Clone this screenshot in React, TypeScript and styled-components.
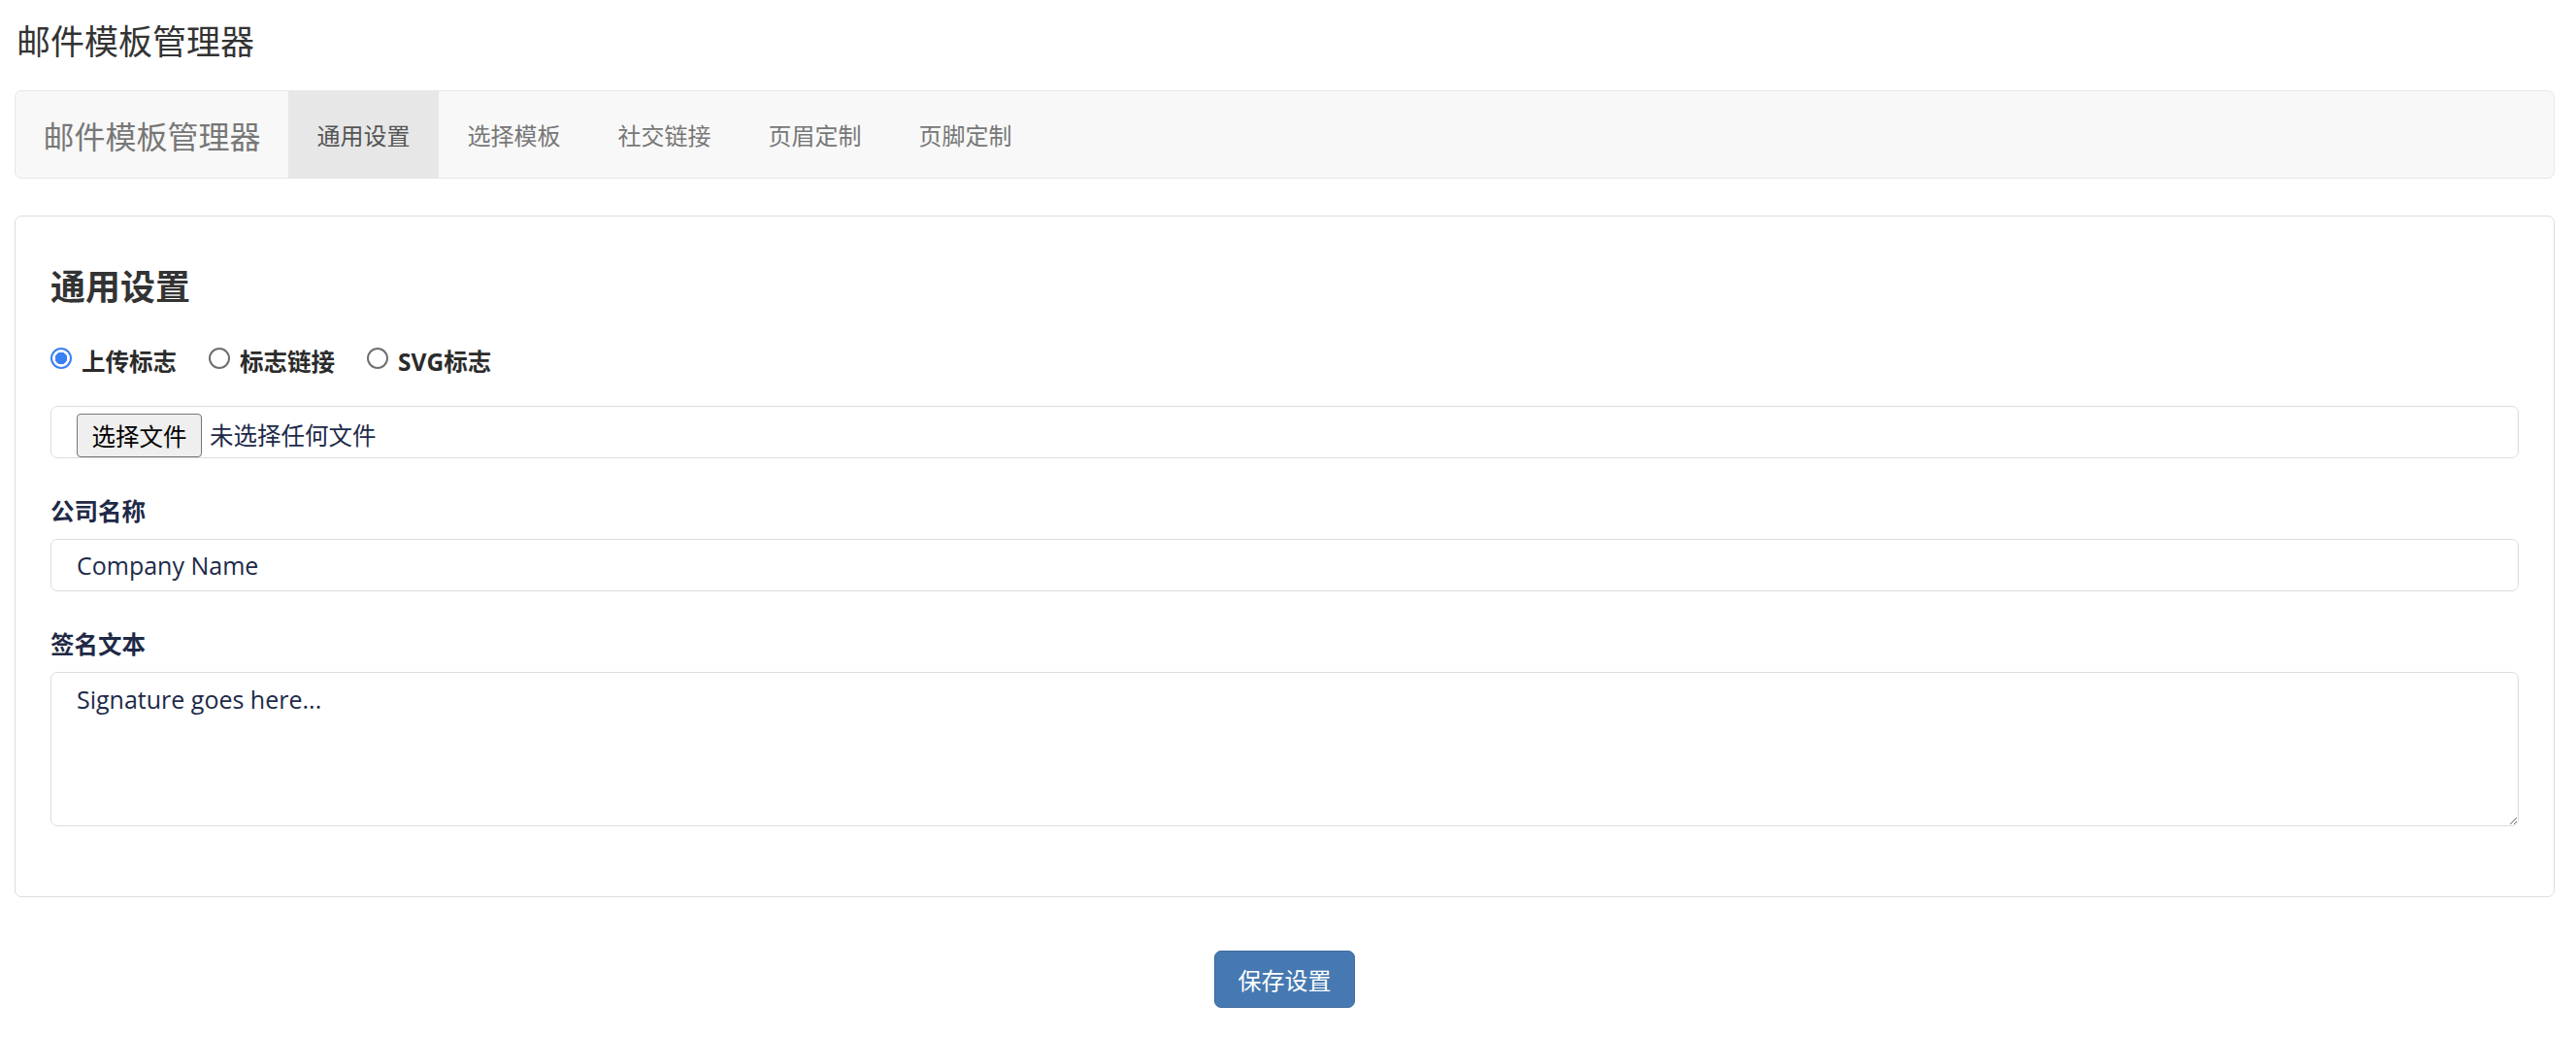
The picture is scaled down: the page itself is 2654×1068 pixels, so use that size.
import React, { useState } from "react"
import styled, { createGlobalStyle } from "styled-components"

const GlobalStyle = createGlobalStyle`
  html, body {
    margin: 0;
    padding: 0;
    background: #ffffff;
  }
  body {
    font-family: "Open Sans", "Noto Sans CJK SC", sans-serif;
    color: #333333;
  }
  * {
    box-sizing: border-box;
  }
`;

const Page = styled.div`
  padding: 22px 22px 40px 15px;
`;

const PageTitle = styled.h1`
  margin: 0 0 30px 2px;
  font-size: 35px;
  line-height: 41px;
  font-weight: 400;
  color: #333;
`;

const NavBar = styled.nav`
  display: flex;
  height: 91px;
  background: #f8f8f8;
  border: 1px solid #e7e7e7;
  border-radius: 7px;
  margin-bottom: 38px;
`;

const Brand = styled.a`
  display: flex;
  align-items: center;
  padding: 0 28.5px;
  font-size: 32px;
  color: #777;
  text-decoration: none;
`;

const Tab = styled.a<{ $active?: boolean }>`
  display: flex;
  align-items: center;
  padding: 0 29.5px;
  font-size: 24px;
  color: ${(p) => (p.$active ? "#555" : "#777")};
  background: ${(p) => (p.$active ? "#e7e7e7" : "transparent")};
  cursor: pointer;
`;

const Card = styled.section`
  border: 1px solid #dddddd;
  border-radius: 7px;
  padding: 36px 36px 37px;
`;

const SectionTitle = styled.h2`
  margin: 16px 0 38px;
  font-size: 36px;
  line-height: 41px;
  font-weight: 700;
  color: #333;
`;

const RadioRow = styled.div`
  display: flex;
  gap: 33px;
  height: 34px;
  margin-bottom: 30px;
`;

const RadioLabel = styled.label`
  display: inline-flex;
  align-items: center;
  gap: 10px;
  font-size: 24.5px;
  font-weight: 700;
  color: #2b2b2b;
  cursor: pointer;
`;

const Radio = styled.input`
  appearance: none;
  margin: 0;
  width: 22px;
  height: 22px;
  border-radius: 50%;
  border: 2px solid #6f6f6f;
  background: #fff;
  position: relative;
  top: -2px;

  &:checked {
    border: 2px solid #3b7ff5;
    background: radial-gradient(circle, #3b7ff5 0 6px, #ffffff 6.5px);
  }
`;

const FileBox = styled.label`
  display: flex;
  align-items: flex-start;
  gap: 8px;
  height: 54px;
  padding: 7px 26px 0;
  border: 1px solid #dddddd;
  border-radius: 7px;
  margin-bottom: 38px;
  cursor: pointer;

  input {
    display: none;
  }
`;

const FileButton = styled.span`
  display: flex;
  align-items: center;
  justify-content: center;
  width: 129px;
  height: 45px;
  background: #efefef;
  border: 1px solid #767676;
  border-radius: 4px;
  font-size: 24.5px;
  color: #000;
`;

const FileName = styled.span`
  line-height: 45px;
  font-size: 24.5px;
  color: #202a48;
`;

const Field = styled.div`
  margin-bottom: 38px;

  &:last-child {
    margin-bottom: 35px;
  }
`;

const Label = styled.label`
  display: block;
  font-size: 24.5px;
  line-height: 34px;
  font-weight: 700;
  color: #1f2a46;
  margin-bottom: 11px;
`;

const TextInput = styled.input`
  display: block;
  width: 100%;
  height: 54px;
  padding: 0 26px;
  border: 1px solid #dddddd;
  border-radius: 7px;
  font-family: "Open Sans", "Noto Sans CJK SC", sans-serif;
  font-size: 25px;
  color: #202a48;
  outline: none;
`;

const TextArea = styled.textarea`
  display: block;
  width: 100%;
  height: 159px;
  padding: 9px 26px;
  border: 1px solid #dddddd;
  border-radius: 7px;
  font-family: "Open Sans", "Noto Sans CJK SC", sans-serif;
  font-size: 25px;
  line-height: 36px;
  color: #202a48;
  outline: none;
`;

const Actions = styled.div`
  display: flex;
  justify-content: center;
  margin-top: 55px;
`;

const SaveButton = styled.button`
  width: 145px;
  height: 59px;
  background: #4679b1;
  border: 1px solid #3e6ca0;
  border-radius: 7px;
  color: #ffffff;
  font-family: "Open Sans", "Noto Sans CJK SC", sans-serif;
  font-size: 24px;
  cursor: pointer;
`;

const tabs = ["通用设置", "选择模板", "社交链接", "页眉定制", "页脚定制"];

const logoOptions = [
  { id: "upload", label: "上传标志" },
  { id: "link", label: "标志链接" },
  { id: "svg", label: "SVG标志" },
];

export default function App() {
  const [activeTab, setActiveTab] = useState(0);
  const [logoType, setLogoType] = useState("upload");
  const [company, setCompany] = useState("Company Name");
  const [signature, setSignature] = useState("Signature goes here...");

  return (
    <>
      <GlobalStyle />
      <Page>
        <PageTitle>邮件模板管理器</PageTitle>

        <NavBar>
          <Brand>邮件模板管理器</Brand>
          {tabs.map((t, i) => (
            <Tab key={t} $active={i === activeTab} onClick={() => setActiveTab(i)}>
              {t}
            </Tab>
          ))}
        </NavBar>

        <Card>
          <SectionTitle>通用设置</SectionTitle>

          <RadioRow>
            {logoOptions.map((o) => (
              <RadioLabel key={o.id}>
                <Radio
                  type="radio"
                  name="logoType"
                  checked={logoType === o.id}
                  onChange={() => setLogoType(o.id)}
                />
                {o.label}
              </RadioLabel>
            ))}
          </RadioRow>

          <FileBox>
            <input type="file" />
            <FileButton>选择文件</FileButton>
            <FileName>未选择任何文件</FileName>
          </FileBox>

          <Field>
            <Label htmlFor="company">公司名称</Label>
            <TextInput id="company" value={company} onChange={(e) => setCompany(e.target.value)} />
          </Field>

          <Field>
            <Label htmlFor="signature">签名文本</Label>
            <TextArea id="signature" value={signature} onChange={(e) => setSignature(e.target.value)} />
          </Field>
        </Card>

        <Actions>
          <SaveButton>保存设置</SaveButton>
        </Actions>
      </Page>
    </>
  );
}
